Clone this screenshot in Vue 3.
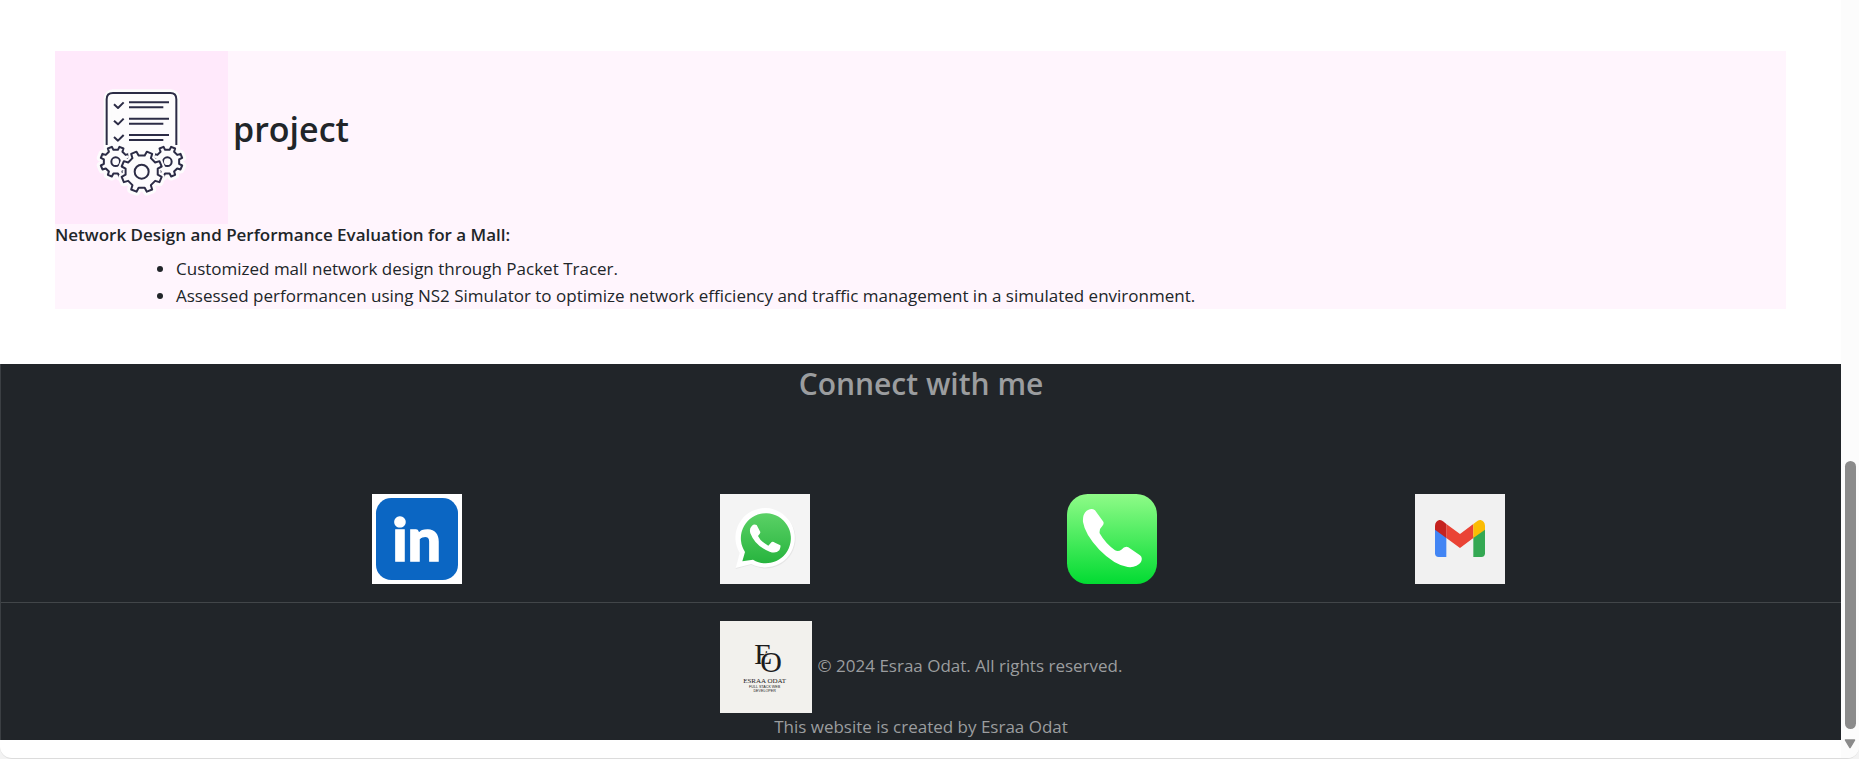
<script setup>
const gear = (cx, cy, outer, inner) => {
  const teeth = 8
  const step = (Math.PI * 2) / teeth
  const points = []
  for (let i = 0; i < teeth; i++) {
    const mid = step * (i + 0.5)
    for (const [radius, offset] of [[inner, -0.25], [outer, -0.17], [outer, 0.17], [inner, 0.25]]) {
      const angle = mid + offset * step * 1.05
      points.push(`${(cx + radius * Math.cos(angle)).toFixed(1)} ${(cy + radius * Math.sin(angle)).toFixed(1)}`)
    }
  }
  return `M${points.join('L')}Z`
}

const leftGear = gear(227, 365, 46, 36)
const rightGear = gear(382, 365, 46, 36)
const mainGear = gear(305, 395, 62, 49)
const checkRows = [187, 236, 285]

const tasks = [
  'Customized mall network design through Packet Tracer.',
  'Assessed performancen using NS2 Simulator to optimize network efficiency and traffic management in a simulated environment.',
]
</script>

<template>
  <div class="window">
    <div class="page">
      <main class="content">
        <section class="card">
          <header class="card-head">
            <svg class="card-icon" viewBox="45 33 519 519" aria-hidden="true">
              <rect x="45" y="33" width="519" height="519" fill="#ffe9fb" />
              <g fill="#fdfcfd" stroke="#fdfcfd" stroke-width="24" stroke-linejoin="round">
                <rect x="203" y="160" width="205" height="200" rx="16" />
                <path :d="leftGear" />
                <path :d="rightGear" />
                <path :d="mainGear" />
              </g>
              <g fill="none" stroke="#2c2c46" stroke-width="6" stroke-linejoin="round">
                <path d="M200 315V178Q200 159 219 159H391Q409 159 409 178V315" />
                <g v-for="y in checkRows" :key="y">
                  <path :d="`M222 ${y + 6}L234 ${y + 17}L251 ${y}`" />
                  <path :d="`M267 ${y}H387M267 ${y + 15}H370`" />
                </g>
                <path :d="leftGear" />
                <path :d="rightGear" />
                <circle cx="227" cy="365" r="13" />
                <circle cx="382" cy="365" r="13" />
                <path :d="mainGear" fill="#fdfcfd" stroke="#fdfcfd" stroke-width="18" />
                <path :d="mainGear" />
                <circle cx="305" cy="395" r="21" />
              </g>
            </svg>
            <h1>project</h1>
          </header>
          <h2>Network Design and Performance Evaluation for a Mall:</h2>
          <ul class="tasks">
            <li v-for="task in tasks" :key="task">{{ task }}</li>
          </ul>
        </section>
      </main>

      <footer class="footer">
        <h2 class="footer-title">Connect with me</h2>
        <nav class="links" aria-label="Contact">
          <a href="#linkedin" aria-label="LinkedIn">
            <svg viewBox="36 42 270 270">
              <rect x="36" y="42" width="270" height="270" fill="#fff" />
              <rect x="48" y="54" width="246" height="246" rx="46" fill="#0b66c3" />
              <text x="170" y="243" class="in-mark">in</text>
            </svg>
          </a>
          <a href="#whatsapp" aria-label="WhatsApp">
            <svg viewBox="28 42 270 270">
              <defs>
                <linearGradient id="chat" x1="0" y1="0" x2="0" y2="1">
                  <stop offset="0" stop-color="#5bd166" />
                  <stop offset="1" stop-color="#27b43e" />
                </linearGradient>
              </defs>
              <rect x="28" y="42" width="270" height="270" fill="#f4f4f4" />
              <path d="M75 267L88 220A89 89 0 1 1 122 254Z" fill="#e6e6e6" />
              <path d="M75 264L87 219A89 89 0 1 1 122 252Z" fill="#fff" />
              <path d="M95 244L103 216A75 75 0 1 1 127 239Z" fill="url(#chat)" />
              <path d="M124 137Q130 131 138 135L149 156Q150 160 142 168Q149 184 173 197L183 186Q187 184 193 188L209 196Q211 200 206 211Q195 222 177 215Q134 199 119 160Q115 145 124 137Z" fill="#fff" />
            </svg>
          </a>
          <a href="#phone" aria-label="Phone">
            <svg viewBox="37 42 270 270">
              <defs>
                <linearGradient id="call" x1="0" y1="0" x2="0" y2="1">
                  <stop offset="0" stop-color="#8ffb88" />
                  <stop offset="1" stop-color="#02db32" />
                </linearGradient>
              </defs>
              <rect x="37" y="42" width="270" height="270" rx="62" fill="url(#call)" />
              <path d="M96 92Q110 83 121 91L146 125Q149 131 143 138Q133 147 135 160Q152 190 181 211Q191 216 200 209Q211 197 221 202L256 226Q265 233 259 246Q246 264 219 261Q178 254 134 209Q91 164 85 126Q83 103 96 92Z" fill="#fff" />
            </svg>
          </a>
          <a href="#mail" aria-label="Gmail">
            <svg viewBox="30 42 270 270">
              <rect x="30" y="42" width="270" height="270" fill="#f1f1f1" />
              <path d="M90 145L124 170V231H101Q90 231 90 220Z" fill="#4285f4" />
              <path d="M205 170L240 145V220Q240 231 229 231H205Z" fill="#34a853" />
              <path d="M124 132L165 162L205 132V174L165 204L124 174Z" fill="#ea4335" />
              <path d="M90 149V137Q91 123 103 120Q109 119 116 125L124 132V174Z" fill="#c5221f" />
              <path d="M240 149V137Q239 123 227 120Q220 119 214 125L205 132V174Z" fill="#fbbc04" />
            </svg>
          </a>
        </nav>
        <hr />
        <p class="copyright">
          <svg viewBox="57 93 276 276" role="img" aria-label="Esraa Odat logo">
            <rect x="57" y="93" width="276" height="276" fill="#f2f1ed" />
            <g class="logo-text">
              <text x="187" y="222" font-size="88">E</text>
              <text x="210" y="247" font-size="90" class="logo-ring">O</text>
              <text x="191" y="279" font-size="21">ESRAA ODAT</text>
              <g class="logo-sub">
                <text x="191" y="293" font-size="11">FULL STACK WEB</text>
                <text x="191" y="305" font-size="11">DEVELOPER</text>
              </g>
            </g>
          </svg>
          <span>© 2024 Esraa Odat. All rights reserved.</span>
        </p>
        <p class="credit">This website is created by Esraa Odat</p>
      </footer>
    </div>

    <div class="scrollbar" aria-hidden="true">
      <div class="thumb"></div>
      <svg class="arrow" viewBox="0 0 12 10"><path d="M1.500 1H10.500L6 8.500Z" fill="#8b8b8b" stroke="#8b8b8b" stroke-width="1.500" stroke-linejoin="round" /></svg>
    </div>
  </div>
</template>

<style>
body {
  margin: 0;
  background: #f3f3f3;
}
</style>

<style scoped>
.window {
  box-sizing: border-box;
  display: grid;
  grid-template-columns: minmax(0, 1fr) 18px;
  min-height: 100vh;
  overflow: hidden;
  border-bottom: 1px solid #dcdcdc;
  border-radius: 0 0 12px 12px;
  background: #fff;
  color: #212529;
  font-family: "Segoe UI", "Open Sans", "Noto Sans", sans-serif;
  font-size: 17px;
  line-height: 27px;
}

h1,
h2,
p,
ul {
  margin: 0;
}

.content {
  padding: 51px 55px 55px;
}

.card {
  background: #fff5fd;
}

.card-head {
  display: flex;
  align-items: center;
  gap: 5px;
}

.card-icon {
  width: 173px;
  height: 173px;
}

h1 {
  padding-bottom: 18px;
  font-size: 34px;
  font-weight: 600;
  line-height: 44px;
}

.card h2 {
  margin-bottom: 9px;
  font-size: 17px;
  font-weight: 600;
  line-height: 22px;
}

.tasks {
  padding-left: 121px;
}

.footer {
  border-left: 1px solid #3b3f43;
  background: #212529;
  color: #9b9d9f;
  text-align: center;
}

.footer-title {
  font-size: 30px;
  font-weight: 600;
  line-height: 40px;
}

.links {
  display: flex;
  justify-content: space-evenly;
  padding: 90px 78px 18px 113px;
}

.links a,
.links svg {
  display: block;
  width: 90px;
  height: 90px;
}

.in-mark {
  fill: #fff;
  stroke: #fff;
  stroke-width: 4px;
  font-family: Lato, sans-serif;
  font-size: 178px;
  font-weight: 900;
  text-anchor: middle;
}

hr {
  margin: 0 0 18px;
  border: 0;
  border-top: 1px solid #424649;
}

.copyright {
  display: flex;
  align-items: center;
  justify-content: center;
  gap: 6px;
}

.copyright svg {
  width: 92px;
  height: 92px;
}

.copyright span {
  padding-bottom: 4px;
}

.logo-text {
  fill: #1c1c1c;
  font-family: "Liberation Serif", serif;
  text-anchor: middle;
}

.logo-ring {
  paint-order: stroke;
  stroke: #f2f1ed;
  stroke-width: 3px;
}

.logo-sub {
  font-family: "Liberation Sans", sans-serif;
}

.scrollbar {
  display: flex;
  flex-direction: column;
  align-items: center;
  justify-content: flex-end;
  gap: 10px;
  padding-bottom: 9px;
  background: #fcfcfc;
}

.thumb {
  width: 11px;
  height: 268px;
  border-radius: 6px;
  background: #8b8b8b;
}

.arrow {
  width: 12px;
  height: 10px;
}
</style>
